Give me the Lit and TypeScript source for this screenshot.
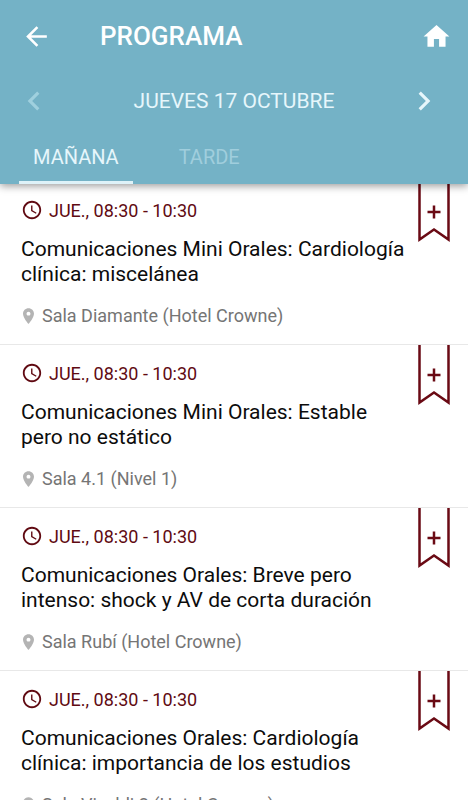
import { LitElement, html, css, svg } from "lit";
import { customElement, property, state } from "lit/decorators.js";
import { classMap } from "lit/directives/class-map.js";

interface Session {
  time: string;
  title: string;
  room: string;
}

const SESSIONS: Session[] = [
  {
    time: "JUE., 08:30 - 10:30",
    title: "Comunicaciones Mini Orales: Cardiología clínica: miscelánea",
    room: "Sala Diamante (Hotel Crowne)",
  },
  {
    time: "JUE., 08:30 - 10:30",
    title: "Comunicaciones Mini Orales: Estable pero no estático",
    room: "Sala 4.1 (Nivel 1)",
  },
  {
    time: "JUE., 08:30 - 10:30",
    title: "Comunicaciones Orales: Breve pero intenso: shock y AV de corta duración",
    room: "Sala Rubí (Hotel Crowne)",
  },
  {
    time: "JUE., 08:30 - 10:30",
    title: "Comunicaciones Orales: Cardiología clínica: importancia de los estudios",
    room: "Sala Vivaldi 2 (Hotel Crowne)",
  },
];

const icon = (size: number, body: unknown) => html`<svg
  width=${size}
  height=${size}
  viewBox="0 0 24 24"
  fill="currentColor"
  aria-hidden="true"
>${body}</svg>`;

const ARROW_BACK = svg`<path d="M20 11H7.83l5.59-5.59L12 4l-8 8 8 8 1.41-1.41L7.83 13H20v-2z"/>`;
const HOME = svg`<path d="M10 20v-6h4v6h5v-8h3L12 3 2 12h3v8z"/>`;
const CHEVRON_LEFT = svg`<path d="M15.41 7.41 14 6l-6 6 6 6 1.41-1.41L10.83 12z"/>`;
const CHEVRON_RIGHT = svg`<path d="M10 6 8.59 7.41 13.17 12l-4.58 4.59L10 18l6-6z"/>`;
const CLOCK = svg`<path d="M11.99 2C6.47 2 2 6.48 2 12s4.47 10 9.99 10C17.52 22 22 17.52 22 12S17.52 2 11.99 2zM12 20c-4.42 0-8-3.58-8-8s3.58-8 8-8 8 3.58 8 8-3.58 8-8 8zm.5-13H11v6l5.25 3.15.75-1.23-4.5-2.67z"/>`;
const PLACE = svg`<path d="M12 2C8.13 2 5 5.13 5 9c0 5.25 7 13 7 13s7-7.75 7-13c0-3.87-3.13-7-7-7zm0 9.5c-1.38 0-2.5-1.12-2.5-2.5s1.12-2.5 2.5-2.5 2.5 1.12 2.5 2.5-1.12 2.5-2.5 2.5z"/>`;

@customElement("session-item")
export class SessionItem extends LitElement {
  @property({ attribute: false }) session!: Session;

  static styles = css`
    :host {
      display: block;
      position: relative;
      padding: 17px 60px 16px 21px;
      border-bottom: 1px solid #e8e8e8;
    }
    .time,
    .room {
      display: flex;
      line-height: 24px;
      font-size: 18px;
    }
    .time {
      align-items: flex-start;
      gap: 6px;
      color: #600a12;
    }
    .room {
      align-items: center;
      gap: 8px;
      padding-left: 2px;
      color: #757575;
    }
    .room svg {
      color: #b4b4b4;
    }
    .title {
      margin: 14px 0 17px;
      font-size: 21px;
      line-height: 25px;
      font-weight: 400;
      color: #0c0c0c;
    }
    .bookmark {
      position: absolute;
      top: 0;
      right: 18px;
      padding: 0;
      border: 0;
      background: none;
      color: #6a0a14;
      cursor: pointer;
    }
    .bookmark svg,
    .time svg,
    .room svg {
      display: block;
      flex: none;
    }
  `;

  render() {
    return html`
      <div class="time">${icon(22, CLOCK)}<span>${this.session.time}</span></div>
      <h2 class="title">${this.session.title}</h2>
      <div class="room">
        <svg width="11" height="16" viewBox="5 2 14 20" fill="currentColor" aria-hidden="true">${PLACE}</svg>
        <span>${this.session.room}</span>
      </div>
      <button class="bookmark" aria-label="Añadir a mi agenda">
        <svg width="32" height="60" viewBox="0 0 32 60" fill="none" stroke="currentColor" aria-hidden="true">
          <path d="M1.5 0V57.5L16 47.500l14.500 10V0" stroke-width="2.500" />
          <path d="M9.500 30h13M16 23.500v13" stroke-width="2.500" />
        </svg>
      </button>
    `;
  }
}

@customElement("app-root")
export class AppRoot extends LitElement {
  @state() private tab = "MAÑANA";

  static styles = css`
    :host {
      display: flex;
      flex-direction: column;
      height: 100vh;
      overflow: hidden;
      background: #fff;
      font-family: Roboto, "Noto Sans", sans-serif;
    }
    .header {
      position: relative;
      z-index: 1;
      flex: none;
      background: #74b2c6;
      color: #fff;
      box-shadow: 0 2px 8px rgba(0, 0, 0, 0.4);
    }
    button {
      padding: 0;
      border: 0;
      background: none;
      color: inherit;
      font: inherit;
      cursor: pointer;
    }
    svg {
      display: block;
    }
    .bar {
      display: flex;
      align-items: center;
      height: 72px;
      padding: 0 16px 0 21px;
    }
    .heading {
      flex: 1;
      margin: 0 0 0 48px;
      font-size: 26px;
      line-height: 32px;
      font-weight: 500;
    }
    .day {
      display: grid;
      grid-template-columns: 1fr auto 1fr;
      align-items: center;
      height: 57px;
      padding: 0 15px;
      font-size: 21px;
      color: #e6f6fb;
    }
    .day button:disabled {
      color: #9fd0de;
      cursor: default;
    }
    .next {
      justify-self: end;
      margin-right: 10px;
    }
    .tabs {
      display: flex;
      gap: 32px;
      padding: 0 19px;
      font-size: 20px;
    }
    .tab {
      box-sizing: border-box;
      height: 55px;
      padding: 4px 14px 0;
      border-bottom: 3px solid transparent;
      color: #a0cedd;
    }
    .tab.selected {
      border-color: #def2f8;
      color: #e6f6fb;
    }
    .list {
      flex: 1;
      min-height: 0;
      margin: -2px 0 0;
      padding: 0;
      list-style: none;
      overflow-y: auto;
      scrollbar-width: none;
    }
  `;

  render() {
    return html`
      <header class="header">
        <div class="bar">
          <button aria-label="Volver">${icon(31, ARROW_BACK)}</button>
          <h1 class="heading">PROGRAMA</h1>
          <button aria-label="Inicio">${icon(31, HOME)}</button>
        </div>
        <div class="day">
          <button class="previous" aria-label="Día anterior" disabled>${icon(38, CHEVRON_LEFT)}</button>
          <span>JUEVES 17 OCTUBRE</span>
          <button class="next" aria-label="Día siguiente">${icon(38, CHEVRON_RIGHT)}</button>
        </div>
        <nav class="tabs" role="tablist">
          ${["MAÑANA", "TARDE"].map(
            (name) => html`<button
              role="tab"
              aria-selected=${this.tab === name}
              class=${classMap({ tab: true, selected: this.tab === name })}
              @click=${() => (this.tab = name)}
            >${name}</button>`
          )}
        </nav>
      </header>
      <ul class="list">
        ${SESSIONS.map((s) => html`<li><session-item .session=${s}></session-item></li>`)}
      </ul>
    `;
  }
}
